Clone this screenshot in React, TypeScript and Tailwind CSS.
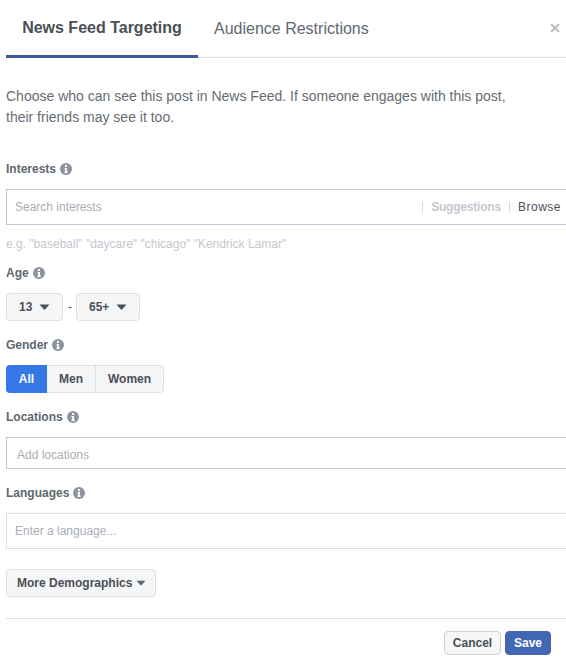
function InfoIcon() {
  return (
    <svg width="12" height="12" viewBox="0 0 12 12" className="ml-1 shrink-0">
      <circle cx="6" cy="6" r="6" fill="#8d949e" />
      <rect x="5" y="2" width="2" height="2" fill="#fff" />
      <path d="M4.5 5H7v3.6h.7V10H4.5V8.6h.7V6.3h-.7z" fill="#fff" />
    </svg>
  );
}

function Caret({ color = "#4b4f56", w = 11, className }: { color?: string; w?: number; className: string }) {
  return (
    <svg width={w} height="6" viewBox="0 0 11 6" className={`shrink-0 ${className}`}>
      <path d="M0.5 0.5h10L6 5.5a0.7 0.7 0 0 1-1 0z" fill={color} />
    </svg>
  );
}

function FieldLabel({ text, className }: { text: string; className: string }) {
  return (
    <div className={`flex h-4 items-center text-xs font-bold text-[#606770] ${className}`}>
      {text}
      <InfoIcon />
    </div>
  );
}

function Select({ value, className }: { value: string; className: string }) {
  return (
    <button className={`flex h-7 items-center rounded-sm border border-[#dddfe2] bg-[#f5f6f7] pl-3 text-xs font-bold text-[#4b4f56] ${className}`}>
      {value}
      <Caret className="ml-[7px]" />
    </button>
  );
}

export default function App() {
  return (
    <div className="h-[664px] w-[566px] overflow-hidden bg-white font-['Liberation_Sans',Arial,sans-serif]">
      {/* tabs */}
      <div className="relative ml-1.5 flex h-[58px] border-b border-[#dddfe2]">
        <div className="-mb-px flex w-[192px] items-center justify-center border-b-[3px] border-[#385898] pt-px text-base font-bold text-[#4b4f56]">
          News Feed Targeting
        </div>
        <div className="ml-4 flex items-center text-base text-[#606770]">Audience Restrictions</div>
        <svg width="10" height="10" viewBox="0 0 10 10" className="absolute right-1.5 top-[23px]">
          <path d="M1 1l8 8M9 1l-8 8" stroke="#bec3c9" strokeWidth="2.4" />
        </svg>
      </div>

      <div className="pl-1.5">
        <p className="mt-[28px] text-sm leading-[21px] text-[#676c74]">
          Choose who can see this post in News Feed. If someone engages with this post,
          <br />
          their friends may see it too.
        </p>

        <FieldLabel text="Interests" className="mt-[33px]" />
        <div className="mt-3 flex h-9 w-[570px] items-center border border-[#bdc7d8] pl-2 text-xs">
          <span className="text-[#a9aeb6]">Search interests</span>
          <span className="ml-auto h-[11px] border-l border-[#d5d8dd]" />
          <span className="ml-2 font-bold tracking-[-0.2px] text-[#c5c9cf]">Suggestions</span>
          <span className="ml-2 h-[11px] border-l border-[#d5d8dd]" />
          <span className="ml-2 mr-[14px] tracking-[0.5px] text-[#4b4f56]">Browse</span>
        </div>
        <div className="mt-[11px] h-4 text-xs leading-4 text-[#c4c7cc]">
          e.g. "baseball" "daycare" "chicago" "Kendrick Lamar"
        </div>

        <FieldLabel text="Age" className="mt-[13px]" />
        <div className="mt-3 flex items-center">
          <Select value="13" className="w-[57px]" />
          <span className="ml-[5px] w-2 text-xs text-[#4b4f56]">-</span>
          <Select value="65+" className="w-16" />
        </div>

        <FieldLabel text="Gender" className="mt-4" />
        <div className="mt-3 flex h-7 w-fit overflow-hidden rounded-sm text-xs font-bold text-[#4b4f56]">
          <div className="flex w-[41px] items-center justify-center bg-[#3578e5] text-white">All</div>
          <div className="flex w-[49px] items-center justify-center border-y border-r border-[#dddfe2] bg-[#f5f6f7]">Men</div>
          <div className="flex w-[68px] items-center justify-center rounded-r-sm border-y border-r border-[#dddfe2] bg-[#f5f6f7]">Women</div>
        </div>

        <FieldLabel text="Locations" className="mt-4" />
        <div className="mt-3 flex h-8 w-[570px] items-center border border-[#bdc7d8] pl-2.5 pt-1 text-xs text-[#a9aeb6]">
          Add locations
        </div>

        <FieldLabel text="Languages" className="mt-4" />
        <div className="mt-3 flex h-9 w-[570px] items-center border border-[#dddfe2] pl-2 text-xs text-[#a9aeb6]">
          Enter a language...
        </div>

        <button className="mt-5 flex h-7 w-[150px] items-center rounded-sm border border-[#dddfe2] bg-[#f5f6f7] pl-2.5 text-xs font-bold text-[#4b4f56]">
          More Demographics
          <Caret color="#606770" w={10} className="ml-1" />
        </button>

        <div className="mt-[21px] flex h-[37px] justify-end border-t border-[#dddfe2] pr-[15px] pt-3">
          <button className="h-6 w-[57px] rounded-sm border border-[#ced0d4] bg-[#f5f6f7] text-xs font-bold text-[#4b4f56]">
            Cancel
          </button>
          <button className="ml-1 h-6 w-[46px] rounded-sm border border-[#4267b2] bg-[#4267b2] text-xs font-bold text-white">
            Save
          </button>
        </div>
      </div>
    </div>
  );
}
